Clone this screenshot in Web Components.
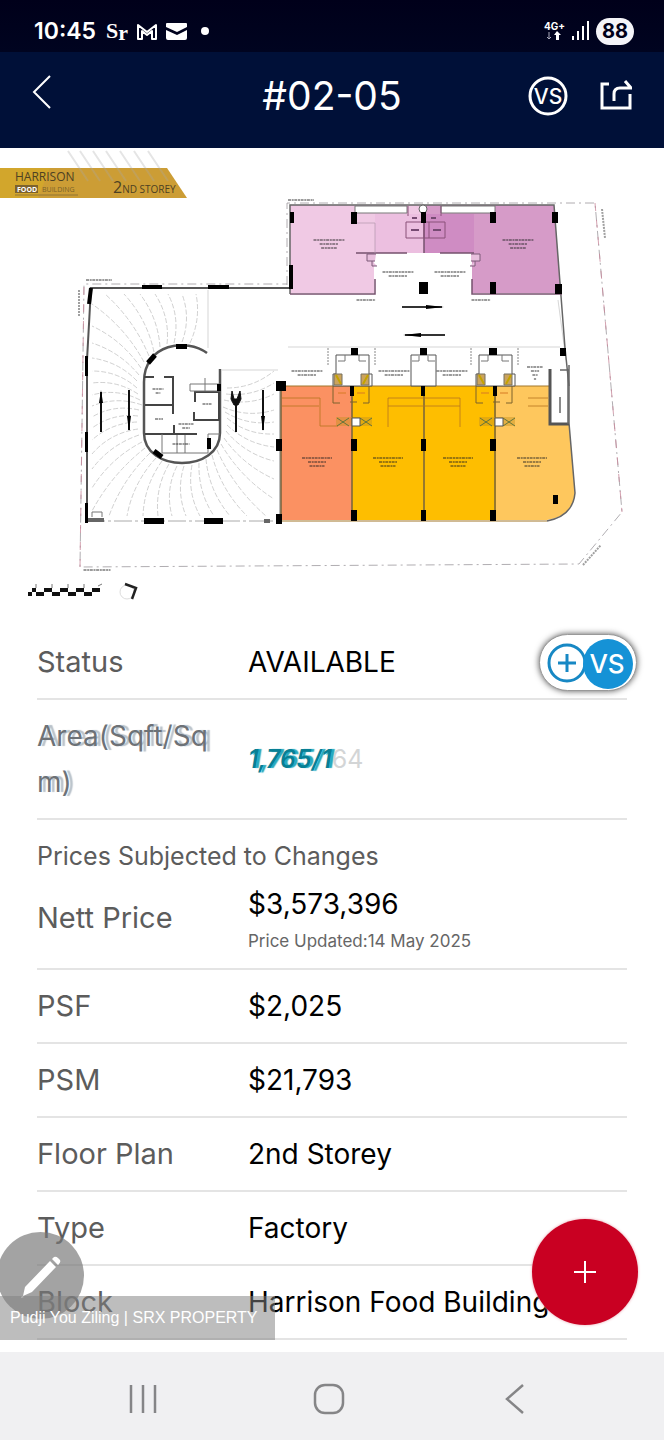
<!DOCTYPE html>
<html lang="en">
<head>
<meta charset="utf-8">
<meta name="viewport" content="width=device-width, initial-scale=1">
<title>#02-05</title>
<style>
    body
    {
        margin: 0;
        background-color: #fff;
        font-family: Inter, "Liberation Sans", sans-serif;
        color: #000;
    }
</style>
</head>
<body>

<unit-page>
    <phone-status slot="top" time="10:45" battery="88"></phone-status>
    <unit-header slot="top">#02-05</unit-header>

    <floor-plan></floor-plan>

    <detail-list>
        <detail-row><span slot="label">Status</span>AVAILABLE<compare-button slot="action"></compare-button></detail-row>
        <area-row></area-row>
        <detail-row>
            <span slot="note">Prices Subjected to Changes</span>
            <span slot="label">Nett Price</span>$3,573,396
            <span slot="sub">Price Updated:14 May 2025</span>
        </detail-row>
        <detail-row><span slot="label">PSF</span>$2,025</detail-row>
        <detail-row><span slot="label">PSM</span>$21,793</detail-row>
        <detail-row><span slot="label">Floor Plan</span>2nd Storey</detail-row>
        <detail-row><span slot="label">Type</span>Factory</detail-row>
        <detail-row><span slot="label">Block</span>Harrison Food Building</detail-row>
    </detail-list>

    <edit-button slot="over"></edit-button>
    <photo-credit slot="over">Pudji You Ziling | SRX PROPERTY</photo-credit>
    <add-button slot="over"></add-button>
    <phone-nav slot="bottom"></phone-nav>
</unit-page>

<script>
// Small helper, every element below has an open shadow root
function define(name, markup) {
    const template = document.createElement('template');
    template.innerHTML = markup;
    customElements.define(name, class extends HTMLElement {
        constructor() {
            super();
            this.attachShadow({ mode: 'open' }).appendChild(template.content.cloneNode(true));
        }

        connectedCallback() {
            // copy plain attributes in the marked places
            this.shadowRoot.querySelectorAll('[data-attr]').forEach((el) => {
                el.textContent = this.getAttribute(el.dataset.attr);
            });
        }
    });
}


// PAGE
define('unit-page', `
    <style>
        :host { display: flex; flex-direction: column; min-height: 100vh; position: relative; overflow: hidden; }
        main { flex: 1; padding-bottom: 12px; }
    </style>
    <slot name="top"></slot>
    <main><slot></slot></main>
    <slot name="bottom"></slot>
    <slot name="over"></slot>
`);


// STATUS BAR
define('phone-status', `
    <style>
        :host
        {
            display: flex;
            align-items: center;
            justify-content: space-between;
            height: 52px;
            padding: 10px 30px 0 34px;
            box-sizing: border-box;
            background: linear-gradient(#00001a, #000420);
            color: #fff;
        }
        div { display: flex; align-items: center; }
        .left { gap: 9px; }
        .right { gap: 7px; }
        .time { font-size: 23px; font-weight: 600; }
        .battery
        {
            padding: 0 6px;
            border-radius: 14px;
            background-color: #f4f4f8;
            color: #000018;
            font-size: 20px;
            line-height: 27px;
            font-weight: 700;
        }
        svg { display: block; }
    </style>
    <div class="left">
        <span class="time" data-attr="time"></span>
        <svg width="104" height="32" viewBox="104 15 104 32" fill="#fff">
            <text x="105" y="38" font-family="Liberation Serif, serif" font-size="22" font-weight="700">S<tspan dy="2">r</tspan></text>
            <path d="M137 39V25l9 7 9-7v14h-4V31l-5 4-5-4v8z" fill="none" stroke="#fff" stroke-width="2" stroke-linejoin="round"/>
            <path d="M166 23h19a1 1 0 0 1 1 1v3l-10 5-11-5v-3a1 1 0 0 1 1-1zM165 30l11 5 10-5v8a2 2 0 0 1-2 2h-17a2 2 0 0 1-2-2z"/>
            <circle cx="204" cy="31" r="4"/>
        </svg>
    </div>
    <div class="right">
        <svg width="46" height="24" viewBox="543 20 46 24" fill="#fff">
            <text x="544" y="31" font-family="Inter, sans-serif" font-size="10" font-weight="700">4G+</text>
            <path d="M549 33v7M547 38l2 2 2-2" fill="none" stroke="#aab" stroke-width="1"/>
            <path d="M557 32l4 4h-2v5h-3v-5h-2z"/>
            <path d="M572 37h2v4h-2zM577 32h2v9h-2zM582 27h2v14h-2zM587 22h2v19h-2z"/>
        </svg>
        <span class="battery" data-attr="battery"></span>
    </div>
`);


// HEADER
define('unit-header', `
    <style>
        :host
        {
            display: grid;
            grid-template-columns: 1fr auto 1fr;
            align-items: center;
            height: 96px;
            padding: 0 32px 8px;
            box-sizing: border-box;
            background-color: #001038;
            color: #fff;
        }
        h1 { margin: 0; font-size: 39px; line-height: 46px; font-weight: 400; }
        div { display: flex; justify-content: flex-end; gap: 32px; }
        button { display: block; padding: 0; border: 0; background: none; color: inherit; justify-self: start; }
        svg { display: block; fill: none; stroke: #fff; }
        svg text { fill: #fff; stroke: none; font: 500 21px Inter, sans-serif; }
    </style>
    <button type="button" aria-label="Back">
        <svg width="20" height="46" viewBox="0 0 20 46"><path d="M18 3L2 19l16 16" stroke-width="2"/></svg>
    </button>
    <h1><slot></slot></h1>
    <div>
        <button type="button" aria-label="Compare">
            <svg width="40" height="40" viewBox="0 0 40 40"><circle cx="20" cy="20" r="18" stroke-width="3"/><text x="20" y="28" text-anchor="middle">VS</text></svg>
        </button>
        <button type="button" aria-label="Share">
            <svg width="32" height="40" viewBox="0 0 32 40" stroke-width="3"><path d="M9 8H2v24h28V18"/><path d="M14 25v-7q0-6 6-6h10M25 5l6 7h-6"/></svg>
        </button>
    </div>
`);


// FLOOR PLAN
// ramp lines going from the core to the walls of the left wing
function rampLines() {
    let d = '';
    const cx = 182;
    const cy = 404;
    for (let a = 4; a < 360; a += 7) {
        const c = Math.cos(a * Math.PI / 180);
        const s = Math.sin(a * Math.PI / 180);
        if (c > 0.22 && s < -0.35) continue;
        const reach = Math.min(c > 0 ? 92 / c : -90 / c, s > 0 ? 112 / s : -110 / s);
        const start = 40 + 22 * Math.abs(s);
        const x1 = cx + c * start;
        const y1 = cy + s * start;
        const x2 = cx + c * reach;
        const y2 = cy + s * reach;
        d += `M${x1.toFixed()} ${y1.toFixed()}Q${((x1 + x2) / 2 - s * 9).toFixed()} ${((y1 + y2) / 2 + c * 9).toFixed()} ${x2.toFixed()} ${y2.toFixed()}`;
    }
    return d;
}

// structural columns: x, y, width, height
const columns = [
    [290, 212, 4, 11], [289, 265, 4, 24], [351, 212, 6, 12], [421, 212, 5, 11], [490, 212, 6, 11], [552, 212, 6, 11],
    [490, 282, 6, 12], [555, 284, 7, 10], [419, 282, 9, 12],
    [351, 348, 7, 7], [420, 348, 7, 7], [489, 348, 8, 7], [560, 348, 6, 8],
    [276, 381, 10, 10], [350, 386, 4, 10], [421, 386, 4, 10], [493, 386, 4, 10],
    [276, 439, 6, 12], [351, 439, 6, 12], [421, 439, 5, 12], [490, 439, 6, 12],
    [276, 514, 6, 10], [351, 510, 6, 11], [421, 510, 5, 11], [490, 510, 6, 11], [553, 495, 5, 9],
    [142, 285, 20, 4], [208, 285, 21, 4], [85, 356, 3, 20], [85, 432, 3, 20], [85, 503, 3, 20],
    [144, 518, 20, 6], [204, 518, 19, 6], [176, 344, 11, 5], [207, 438, 4, 11], [217, 384, 4, 7]
];

// captions too small to read, drawn as two or three broken lines
function caption(x, y, width, rows) {
    let d = '';
    for (let i = 0; i < rows; i++) {
        const w = i === 0 ? width : width * 0.7 - i * 3;
        d += `M${x - w / 2} ${y + i * 4}h${w}`;
    }
    return d;
}

const captions = [
    [329, 240, 31, 3], [518, 240, 31, 3], [398, 272, 31, 2], [450, 272, 31, 2], [366, 300, 19, 1], [481, 300, 19, 1],
    [307, 371, 31, 2], [394, 371, 31, 2], [452, 371, 31, 2], [535, 367, 16, 4],
    [317, 458, 30, 3], [388, 458, 30, 3], [458, 458, 30, 3], [532, 458, 30, 3],
    [158, 389, 11, 2], [159, 419, 8, 1], [207, 404, 9, 1], [186, 424, 15, 2], [181, 444, 17, 1],
    [301, 200, 26, 1], [99, 280, 26, 1], [97, 570, 27, 1]
];

// toilet blocks on top of the orange units
function toilets(x) {
    return `<path d="M${x - 19} 386v-12h3v-19h33v19h3v12z" fill="#fff" stroke="#555"/>
        <path d="M${x - 14} 361h7v-6M${x + 14} 361h-7v-6" fill="none" stroke="#777"/>
        <path d="M${x - 18} 374h8v11h-8zM${x + 9} 374h8v11h-8z" fill="#cba35c" stroke="#76705e"/>
        <path d="M${x - 16} 375l5 9M${x + 16} 375l-5 9" stroke="#c5a300" stroke-width="2"/>
        <path d="M${x - 12} 403h-7v-17M${x + 11} 403h6v-17M${x - 2} 402h7" fill="none" stroke="#7d622d"/>
        <path d="M${x - 14} 393h8M${x + 5} 393h8" stroke="#d77a25"/>
        <path d="M${x - 16} 417h36v9h-36z" fill="#c69321" opacity=".45"/>
        <path d="M${x - 15} 418l12 8M${x - 15} 426l12-8M${x + 8} 418l12 8M${x + 8} 426l12-8" stroke="#62743b"/>
        <path d="M${x} 418h8v8h-8z" fill="#fff" stroke="#555"/>`;
}

define('floor-plan', `
    <style>
        :host { display: block; }
        svg { display: block; width: 100%; height: auto; }
        .banner { font-family: "Open Sans", "Liberation Sans", sans-serif; fill: #4d4123; }
    </style>
    <svg viewBox="0 148 664 478" role="img" aria-label="2nd storey plan" fill="none">
        <!-- banner -->
        <path d="M0 168H167L187 198H0z" fill="#cc9d35"/>
        <path d="M0 168h50l-12 30H0z" fill="#d2a62c"/>
        <path d="M68 151l20 30M80 151l20 30M93 151l20 30M106 151l20 30M120 151l20 30M134 151l20 30M148 151l20 30" stroke="#aaa" stroke-width="2" opacity=".3"/>
        <text class="banner" x="15" y="181" font-size="12">HARRISON</text>
        <path d="M15 185h23v8H15z" fill="#7c622e"/>
        <text class="banner" x="17" y="192" font-size="7" font-weight="700" style="fill:#fff">FOOD</text>
        <text class="banner" x="42" y="192" font-size="7" opacity=".65">BUILDING</text>
        <path d="M15 195h63" stroke="#927434"/>
        <text class="banner" x="113" y="193" font-size="16">2<tspan font-size="10">ND STOREY</tspan></text>

        <!-- site boundary -->
        <path d="M287 285V203H595L622 512 579 564 80 567 84 284H287" stroke="#8e8a90" stroke-dasharray="9 4 2 4" opacity=".7"/>
        <path d="M595 203L622 512M80 567l4-283" stroke="#c98a9c" stroke-dasharray="8 9" opacity=".8"/>
        <path d="M602 209l3 29M583 565l18-20M79 290v26" stroke="#777" stroke-width="2" stroke-dasharray="2 1" opacity=".7"/>

        <!-- left wing -->
        <path d="${rampLines()}" stroke="#bbb" stroke-width=".7" stroke-dasharray="5 2"/>
        <path d="M208 290v58M222 370h56M558 300l8 60M288 347h272" stroke="#bbb" stroke-width=".6"/>
        <path d="M290 288H91L87 360V520" stroke="#555" stroke-width="2"/>
        <path d="M91 288l-2 16" stroke="#000" stroke-width="4"/>
        <path d="M87 521h190" stroke="#aaa" stroke-dasharray="18 3 3 3"/>
        <path d="M88 520h16M264 521h6" stroke="#666" stroke-width="4"/>
        <path d="M92 517v-5h10v5M280 386v134" stroke="#777"/>
        <path d="M207 353C187 338 144 343 144 382v51c0 40 76 40 76 0v-64" stroke="#555" stroke-width="2.500"/>
        <path d="M148 363l7-8M154 451l8 6" stroke="#000" stroke-width="5"/>
        <path d="M144 377h10M164 377h9v37M145 405h27M145 434h29v-9M195 397v-5h24v28h-25v-8M195 402v-6M174 434h23" stroke="#444" stroke-width="2"/>
        <path d="M162 434v19h46v-19h12M177 435v18M185 435v18M190 384h30v7h-30zM205 378v13" stroke="#777"/>
        <path d="M101 392v40M129 390v40M236 405v27M263 390v40" stroke="#111" stroke-width="2"/>
        <path d="M101 390l-2 13h4zM129 431l-2-15h4zM263 431l-2-15h4z" fill="#000"/>
        <path d="M232 391l-1 8 3 6h4l3-6-1-8-3 8h-3z" fill="#111" stroke="#111"/>

        <!-- top units -->
        <path d="M290 205h134v48h-50v40H290z" fill="#f0c9e4"/>
        <path d="M375 214h49v39h-49z" fill="#ecbfe0"/>
        <path d="M424 205h130l7 88h-89v-40h-48z" fill="#d69bc8"/>
        <path d="M424 214h50v39h-50z" fill="#cf8cc3"/>
        <path d="M290 294V205H554L565 348 569 386" stroke="#666" stroke-width="1.500"/>
        <path d="M290 294h85v-15M472 279v15h90M356 253h51M440 253h34M424 207v46" stroke="#75516e" stroke-width="1.500"/>
        <path d="M355 206h52v7h-52zM441 206h54v7h-54z" fill="#fff" stroke="#777"/>
        <path d="M406 222v16h39v-16zM424 222v16M429 222v16M408 206v10M441 206v10" stroke="#895078"/>
        <circle cx="423" cy="209" r="4" fill="#fff" stroke="#666"/>
        <path d="M411 230h8M433 230h8M412 218h5M431 218h5" stroke="#764b72" stroke-width="2"/>
        <path d="M376 254h-9v7h8M372 261v5h5M471 254h9v7h-9M475 261v5h-5" fill="#e8bfdd" stroke="#7d5b79"/>
        <path d="M375 223v30M357 223h18" stroke="#b395ad" stroke-width=".7"/>
        <path d="M402 307h40M405 335h40" stroke="#333" stroke-width="2"/>
        <path d="M444 307l-18-2v4zM403 335l18-2v4z" fill="#000"/>

        <!-- bottom units -->
        <path d="M281 386h71v134h-71z" fill="#fb9162"/>
        <path d="M352 386h144v134H352z" fill="#febe00"/>
        <path d="M496 386h53v37h20l6 70q-2 23-28 27h-51z" fill="#fec75d"/>
        <path d="M281 386v134M352 386v134M424 386v134M495 386v134" stroke="#75633d" stroke-width="1.500"/>
        <path d="M281 386h270M281 521h266" stroke="#a1762a"/>
        <path d="M569 365v58l6 70q-2 23-28 28" stroke="#666" stroke-width="1.500"/>
        <path d="M550 369v55h19" stroke="#555" stroke-width="3"/>
        <path d="M560 370h9M560 397v16M568 370v54" stroke="#666" stroke-width="1.500"/>
        <path d="M282 398h38v28h18M282 406h37M388 427v-29h72v29M388 406h72M528 398h20M528 406h20" stroke="#b8741e" stroke-width=".8"/>
        ${toilets(352)}
        ${toilets(495)}
        <path d="M411 386v-31h25v31z" fill="#fff" stroke="#555"/>
        <path d="M412 361h7v-5M435 361h-7v-5" stroke="#777"/>
        <path d="M328 348v18M375 348v18M471 348v18M518 348v18" stroke="#888" stroke-dasharray="2 1"/>

        <path d="${captions.map((c) => caption(...c)).join('')}" stroke="#222" stroke-width="1.500" stroke-dasharray="3 .7 2 .6" opacity=".6"/>
        ${columns.map(([x, y, w, h]) => `<rect x="${x}" y="${y}" width="${w}" height="${h}" fill="#000"/>`).join('')}

        <!-- scale and north -->
        <path d="M28 594h4M36 594h8M52 594h8M68 594h8M84 594h8M32 590h4M44 590h8M60 590h8M76 590h8M92 590h8" stroke="#111" stroke-width="4"/>
        <path d="M36 588v-4M52 588v-4M68 588v-4M84 588v-4M98 586l4-2" stroke="#777"/>
        <circle cx="127" cy="592" r="7" stroke="#ddd"/>
        <path d="M125 584l11 4-4 11" stroke="#222" stroke-width="2.500"/>
    </svg>
`);


// DETAILS
define('detail-list', `
    <style>
        :host { display: block; padding: 0 37px; }
    </style>
    <slot></slot>
`);

const rowStyle = `
        :host
        {
            display: grid;
            grid-template-columns: 211px 1fr auto;
            align-items: center;
            padding: 13px 0;
            border-bottom: 2px solid #e4e4e4;
            font-size: 28px;
            line-height: 46px;
        }
        .label { color: #5c5c5c; font-size: 29px; }
        .value { white-space: nowrap; }
`;

define('detail-row', `
    <style>
        ${rowStyle}
        .note { grid-column: 1 / -1; color: #5c5c5c; font-size: 25px; }
        ::slotted([slot=note]) { display: block; padding-bottom: 2px; }
        ::slotted([slot=sub]) { display: block; color: #666; font-size: 17px; line-height: 28px; }
    </style>
    <div class="note"><slot name="note"></slot></div>
    <div class="label"><slot name="label"></slot></div>
    <div class="value"><slot></slot><slot name="sub"></slot></div>
    <slot name="action"></slot>
`);

// this row is caught while changing, both states show through each other
define('area-row', `
    <style>
        ${rowStyle}
        .label { color: #6d7277; font-size: 28px; text-shadow: 4px 0 1px #b9c2ca; }
        .value { color: #d3d5d6; font-size: 25px; }
        b { color: #087f94; font-weight: 600; font-style: italic; text-shadow: 3px 0 1px #22a9c0; }
    </style>
    <div class="label">Area(Sqft/Sq<br>m)</div>
    <div class="value"><b>1,765/1</b>64</div>
`);

define('compare-button', `
    <style>
        :host { display: flex; align-items: center; width: 88px; height: 46px; }
        button
        {
            display: block;
            flex-shrink: 0;
            padding: 0;
            border: 1px solid #999;
            border-radius: 30px;
            background-color: #fff;
            box-shadow: 0 0 6px #555;
            overflow: hidden;
        }
        svg { display: block; }
        text { font: 500 26px Inter, sans-serif; }
    </style>
    <button type="button" aria-label="Add to compare">
        <svg width="96" height="55" viewBox="0 0 96 55" fill="none">
            <circle cx="27" cy="28" r="18" stroke="#1788c4" stroke-width="3"/>
            <path d="M18 28h18M27 19v18" stroke="#1788c4" stroke-width="3"/>
            <circle cx="68" cy="29" r="25" fill="#1592d6"/>
            <text x="67" y="38" text-anchor="middle" fill="#fff">VS</text>
        </svg>
    </button>
`);


// FLOATING ITEMS
define('edit-button', `
    <style>
        :host { position: absolute; left: -3px; bottom: 121px; }
        button { display: block; padding: 0; border: 0; border-radius: 50%; background-color: rgba(120, 120, 120, .68); }
        svg { display: block; }
    </style>
    <button type="button" aria-label="Edit">
        <svg width="87" height="87" viewBox="-3 1232 87 87" fill="#fff"><path d="M50 1261l6 6-24 25-9 4 2-9zM52 1259l2-2q2-1 4 1l2 2q1 2-1 4l-1 1zM22 1296l2 1-3 1z"/></svg>
    </button>
`);

define('photo-credit', `
    <style>
        :host
        {
            position: absolute;
            left: 0;
            bottom: 100px;
            padding: 0 17px 0 10px;
            background-color: rgba(128, 128, 128, .52);
            color: #fff;
            font-family: "Liberation Sans", sans-serif;
            font-size: 16px;
            line-height: 44px;
        }
    </style>
    <slot></slot>
`);

define('add-button', `
    <style>
        :host { position: absolute; right: 26px; bottom: 115px; }
        button { display: block; padding: 0; border: 0; border-radius: 50%; background-color: #c90022; box-shadow: 0 0 3px #e8a0ac; }
        svg { display: block; }
    </style>
    <button type="button" aria-label="Add">
        <svg width="106" height="106" viewBox="0 0 106 106"><path d="M42 53h22M53 42v22" stroke="#fff" stroke-width="2"/></svg>
    </button>
`);


// SYSTEM NAVIGATION
define('phone-nav', `
    <style>
        :host
        {
            display: flex;
            justify-content: space-around;
            align-items: center;
            height: 88px;
            padding: 6px 56px 0 50px;
            box-sizing: border-box;
            background-color: #f0f0f2;
        }
        button { display: block; padding: 0; border: 0; background: none; }
        svg { display: block; fill: none; stroke: #858587; stroke-width: 2.500; }
    </style>
    <button type="button" aria-label="Recent apps"><svg width="32" height="32" viewBox="0 0 32 32"><path d="M4 2v28M16 2v28M28 2v28"/></svg></button>
    <button type="button" aria-label="Home"><svg width="32" height="32" viewBox="0 0 32 32"><rect x="2" y="2" width="28" height="28" rx="10"/></svg></button>
    <button type="button" aria-label="Back"><svg width="32" height="32" viewBox="0 0 32 32"><path d="M24 2L8 16l16 14"/></svg></button>
`);
</script>
</body>
</html>
